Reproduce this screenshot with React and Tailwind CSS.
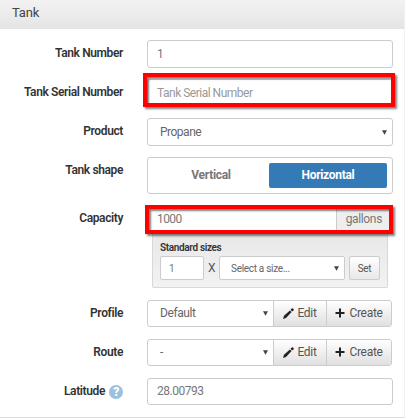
import clsx from 'clsx'

function Row({ label, help, className, children }) {
  return (
    <div className={clsx('flex items-start leading-[27px]', className)}>
      <label className="flex w-[123px] shrink-0 items-center justify-end gap-1 text-[12px] font-semibold tracking-[-0.38px] text-[#333]">
        {label}
        {help && <HelpIcon />}
      </label>
      <div className="relative ml-6 w-[246px] shrink-0 leading-normal">{children}</div>
    </div>
  )
}

function HelpIcon() {
  return (
    <span className="flex h-[14px] w-[14px] items-center justify-center rounded-full bg-[#9cc0e0] text-[12px] leading-none font-black text-white">
      ?
    </span>
  )
}

function Arrow() {
  return (
    <svg className="shrink-0" width="5" height="5" viewBox="0 0 5 5">
      <path d="M0 0.3h5L2.5 4.8z" fill="#444" />
    </svg>
  )
}

function Pencil() {
  return (
    <svg width="11" height="11" viewBox="0 0 11 11" fill="#222">
      <path d="M0 11l1-3.200L6.900 2.400l1.700 1.700L3 9.900z" />
      <path d="M7.500 1.800L8.800.5q.6-.5 1.200 0l.5.5q.5.6 0 1.200L9.200 3.500z" />
    </svg>
  )
}

function Plus() {
  return (
    <svg width="10" height="10" viewBox="0 0 10 10" fill="#222">
      <path d="M4 0.500h2v3.500h3.500v2H6v3.500H4V6H.5V4H4z" />
    </svg>
  )
}

function SelectWithButtons({ value }) {
  return (
    <div className="flex h-[27px] w-[245px] overflow-hidden rounded-[3px] border border-[#ccc] text-[12px] tracking-[-0.4px] text-[#666]">
      <div className="flex w-[125px] items-center justify-between pr-[5px] pb-px pl-3">
        {value}
        <Arrow />
      </div>
      <button className="flex w-[53px] items-center justify-center gap-[3px] border-l border-[#ccc] bg-linear-to-b from-white to-[#e0e0e0] pb-px tracking-[-0.3px] text-[#555]">
        <Pencil /> Edit
      </button>
      <button className="flex flex-1 items-center justify-center gap-1 border-l border-[#ccc] bg-linear-to-b from-white to-[#e0e0e0] pb-px tracking-[-0.3px] text-[#555]">
        <Plus /> Create
      </button>
    </div>
  )
}

const box = 'flex items-center rounded-[3px] border border-[#ccc] bg-white text-[12px] tracking-[-0.5px]'
const highlight = 'absolute border-4 border-[#f00] shadow-[2px_2px_2px_rgba(0,0,0,0.5),inset_2px_2px_2px_rgba(0,0,0,0.5)]'

export default function App() {
  return (
    <div className="h-[418px] w-[405px] overflow-hidden border-r border-[#f0f0f0] bg-white [font-family:Roboto,sans-serif]">
      <header className="flex h-[29px] items-center border-b border-[#e4e4e4] bg-linear-to-b from-[#f2f2f2] to-[#e5e5e5] pb-[2px] pl-3 text-[13px] tracking-[-0.2px] text-[#444]">
        Tank
      </header>

      <main className="h-[389px] border-b border-[#ddd] pt-[11px]">
        <Row label="Tank Number" className="h-[39px]">
          <div className={clsx(box, 'h-[28px] pl-[9px] text-[#777]')}>1</div>
        </Row>
        <Row label="Tank Serial Number" className="h-[39px]">
          <div className={clsx(box, 'h-[28px] pl-[9px] text-[#999]')}>Tank Serial Number</div>
          <div className={clsx(highlight, '-top-[6px] -left-1 h-[34px] w-[252px]')} />
        </Row>
        <Row label="Product" className="h-[39px]">
          <div className={clsx(box, 'h-[28px] justify-between pr-[5px] pl-3 text-[#666]')}>
            Propane
            <Arrow />
          </div>
        </Row>
        <Row label="Tank shape" className="h-[48px]">
          <div className="flex h-[37px] rounded-[3px] border border-[#ccc] p-[5px] text-[12px] font-bold tracking-[-0.3px]">
            <div className="flex w-[116px] items-center justify-center pb-px text-[#777]">Vertical</div>
            <div className="flex flex-1 items-center justify-center rounded-[2px] bg-[#337ab7] pb-px text-white">Horizontal</div>
          </div>
        </Row>

        <Row label="Capacity" className="h-[95px]">
          <div className="flex h-[28px] w-[242px] bg-white text-[12px] tracking-[-0.6px] text-[#777]">
            <div className="flex flex-1 items-center pl-[10px]">1000</div>
            <div className="flex w-[53px] items-center justify-end border-l border-[#ccc] bg-[#eee] pr-[7px] pb-px tracking-[-0.35px]">gallons</div>
          </div>
          <div className="ml-[5px] h-[55px] w-[236px] rounded-b-[2px] border border-t-0 border-[#d8d8d8] bg-linear-to-b from-[#e8e8e8] to-[#f2f2f2] px-[7px] pt-[8px]">
            <div className="text-[10px] leading-[14px] font-semibold tracking-[-0.35px] text-[#333]">Standard sizes</div>
            <div className="mt-px flex items-center text-[10px] tracking-[-0.3px]">
              <div className="flex h-[24px] w-[44px] items-center rounded-[2px] border border-[#ccc] bg-white pl-2 text-[#777]">1</div>
              <span className="w-[15px] text-center text-[12px] text-[#555]">X</span>
              <div className="flex h-[24px] w-[126px] items-center justify-between rounded-[2px] border border-[#ccc] bg-white pr-[5px] pl-[11px] text-[#666]">
                Select a size...
                <Arrow />
              </div>
              <button className="ml-1 h-[24px] w-[31px] rounded-[2px] border border-[#ccc] bg-linear-to-b from-white to-[#e8e8e8] text-[#555]">Set</button>
            </div>
          </div>
          <div className={clsx(highlight, '-left-[2px] top-0 h-[29px] w-[248px]')} />
        </Row>

        <Row label="Profile" className="h-[39px]">
          <SelectWithButtons value="Default" />
        </Row>
        <Row label="Route" className="h-[39px]">
          <SelectWithButtons value="-" />
        </Row>
        <Row label="Latitude" help>
          <div className={clsx(box, 'h-[27px] pb-px pl-[9px] text-[#777]')}>28.00793</div>
        </Row>
      </main>
    </div>
  )
}
